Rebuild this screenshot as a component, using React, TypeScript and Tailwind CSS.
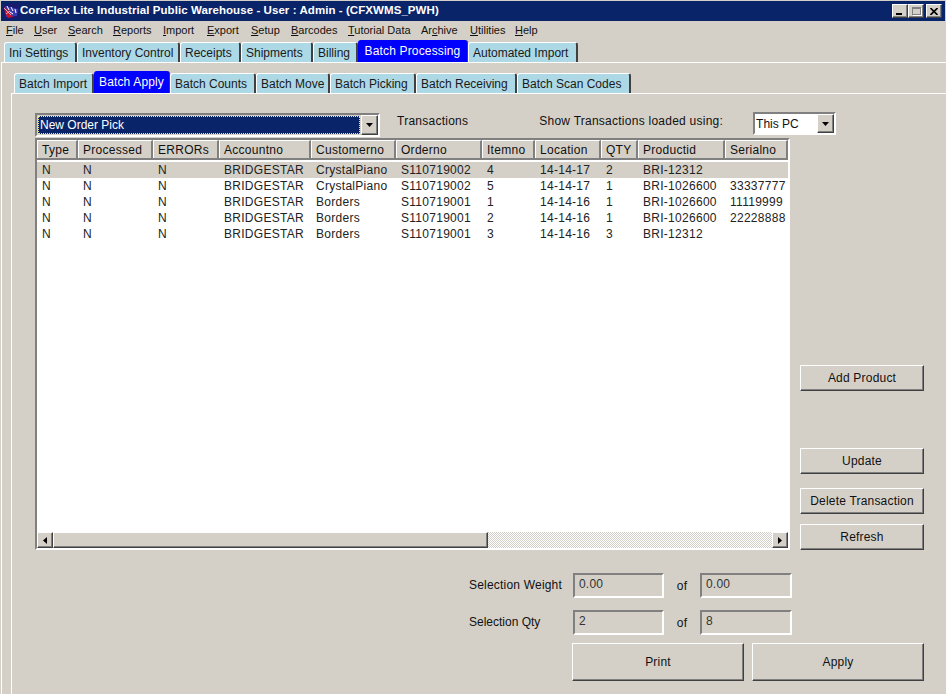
import React from "react";

const menus: [string, string, string, number][] = [
  ["", "F", "ile", 28],
  ["", "U", "ser", 34],
  ["", "S", "earch", 45],
  ["", "R", "eports", 50],
  ["", "I", "mport", 44],
  ["", "E", "xport", 44],
  ["", "S", "etup", 40],
  ["", "B", "arcodes", 57],
  ["", "T", "utorial Data", 73],
  ["Ar", "c", "hive", 49],
  ["", "U", "tilities", 45],
  ["", "H", "elp", 30],
];

const mainTabs: [string, number, boolean][] = [
  ["Ini Settings", 73, false],
  ["Inventory Control", 103, false],
  ["Receipts", 61, false],
  ["Shipments", 72, false],
  ["Billing", 45, false],
  ["Batch Processing", 110, true],
  ["Automated Import", 110, false],
];

const subTabs: [string, number, boolean][] = [
  ["Batch Import", 80, false],
  ["Batch Apply", 76, true],
  ["Batch Counts", 86, false],
  ["Batch Move", 74, false],
  ["Batch Picking", 86, false],
  ["Batch Receiving", 101, false],
  ["Batch Scan Codes", 114, false],
];

const cols = [
  "Type",
  "Processed",
  "ERRORs",
  "Accountno",
  "Customerno",
  "Orderno",
  "Itemno",
  "Location",
  "QTY",
  "Productid",
  "Serialno",
];

const rows = [
  ["N", "N", "N", "BRIDGESTAR", "CrystalPiano", "S110719002", "4", "14-14-17", "2", "BRI-12312", ""],
  ["N", "N", "N", "BRIDGESTAR", "CrystalPiano", "S110719002", "5", "14-14-17", "1", "BRI-1026600", "33337777"],
  ["N", "N", "N", "BRIDGESTAR", "Borders", "S110719001", "1", "14-14-16", "1", "BRI-1026600", "11119999"],
  ["N", "N", "N", "BRIDGESTAR", "Borders", "S110719001", "2", "14-14-16", "1", "BRI-1026600", "22228888"],
  ["N", "N", "N", "BRIDGESTAR", "Borders", "S110719001", "3", "14-14-16", "3", "BRI-12312", ""],
];

const gridCols = "grid grid-cols-[41px_75px_66px_92px_85px_86px_53px_66px_37px_87px_63px]";

const bevel =
  "border border-t-white border-l-white border-r-[#404040] border-b-[#404040] shadow-[inset_-1px_-1px_0_#808080] bg-[#d4d0c8]";

const sunken =
  "border-2 border-t-[#808080] border-l-[#808080] border-r-white border-b-white";

function Arrow({ dir }: { dir: "down" | "left" | "right" }) {
  const pts = dir === "down" ? "0,0 7,0 3.5,4" : dir === "left" ? "4,0 4,7 0,3.5" : "0,0 0,7 4,3.5";
  return (
    <svg width={dir === "down" ? 7 : 4} height={dir === "down" ? 4 : 7} className="block">
      <polygon points={pts} fill="#000" />
    </svg>
  );
}

function Tabs({ items }: { items: [string, number, boolean][] }) {
  return (
    <div className="flex items-end h-[21px]">
      {items.map(([label, w, on]) => (
        <div
          key={label}
          style={{ width: w }}
          className={
            on
              ? "h-[22px] shrink-0 flex items-center justify-center rounded-t-[3px] bg-[#0000ff] text-white text-[12px] tracking-[0.15px] pb-[1px] border-r border-r-[#404040]"
              : "h-[20px] shrink-0 flex items-center pl-[4px] rounded-t-[3px] bg-[#add8e6] text-[#1a1a1a] text-[12px] border-t border-l border-t-white border-l-white border-r-2 border-r-[#404040]"
          }
        >
          <span className="whitespace-nowrap">{label}</span>
        </div>
      ))}
    </div>
  );
}

function Button({ label, className }: { label: string; className: string }) {
  return (
    <div className={`${bevel} flex items-center justify-center text-[12px] tracking-[0.2px] text-[#111] ${className}`}>
      {label}
    </div>
  );
}

function Field({ value, className }: { value: string; className: string }) {
  return (
    <div className={`${sunken} ${className} h-[25px] pl-[4px] text-[12px] tracking-[0.2px] leading-[19px] text-[#333]`}>
      {value}
    </div>
  );
}

export default function App() {
  return (
    <div className="w-[946px] h-[694px] overflow-hidden bg-[#d4d0c8] font-['Liberation_Sans',Arial,sans-serif] text-[#111] flex flex-col">
      {/* Title bar */}
      <div className="h-[20px] mt-px ml-px mr-[1px] shrink-0 bg-[#0a246a] flex items-center pl-[2px] pr-[3px]">
        <svg width="16" height="15" viewBox="0 0 16 15" className="shrink-0 mr-[1px]">
          <rect width="16" height="15" fill="#1a1a6e" />
          <polygon points="2,2 15,5 14,12 3,13" fill="#3a3ab0" />
          <polygon points="1,3 6,7 10,13 5,14 2,9" fill="#c8102e" />
          <path d="M4 2 L6 6 M8 3 L10 7 M12 5 L13 9 M7 8 L10 10" stroke="#fff" strokeWidth="1" />
          <path d="M1 4 L8 11 M3 10 L7 7" stroke="#e0b0c0" strokeWidth="1" />
        </svg>
        <span className="text-white font-bold text-[11.5px] tracking-[0.07px] whitespace-nowrap">
          CoreFlex Lite Industrial Public Warehouse - User : Admin - (CFXWMS_PWH)
        </span>
        <div className="ml-auto flex items-center">
          <div className={`${bevel} w-[16px] h-[14px] flex items-end pb-[2px] pl-[3px]`}>
            <div className="w-[6px] h-[2px] bg-black" />
          </div>
          <div className={`${bevel} w-[16px] h-[14px] flex items-center justify-center`}>
            <div className="w-[9px] h-[8px] border border-[#808080] border-t-2 shadow-[1px_1px_0_#fff]" />
          </div>
          <div className={`${bevel} w-[16px] h-[14px] ml-[2px] flex items-center justify-center`}>
            <svg width="8" height="7" viewBox="0 0 8 7">
              <path d="M0.5 0 L7.5 7 M7.5 0 L0.5 7" stroke="#000" strokeWidth="1.6" />
            </svg>
          </div>
        </div>
      </div>

      {/* Menu bar */}
      <div className="h-[20px] shrink-0 flex items-center pl-[6px] pb-[2px] text-[11px] text-[#111]">
        {menus.map(([pre, key, rest, w]) => (
          <span key={pre + key + rest} style={{ width: w }} className="shrink-0 whitespace-nowrap">
            {pre}
            <u>{key}</u>
            {rest}
          </span>
        ))}
      </div>

      {/* Main tabs */}
      <div className="pl-[4px] shrink-0">
        <Tabs items={mainTabs} />
      </div>

      {/* Outer panel */}
      <div className="flex-1 ml-px border-t border-l border-t-white border-l-white pl-[9px] pt-[9px] flex flex-col min-h-0">
        <div className="pl-[3px] shrink-0">
          <Tabs items={subTabs} />
        </div>

        {/* Inner panel */}
        <div className="flex-1 border-t border-l border-t-white border-l-white pl-[23px] pt-[17px] min-h-0">
          {/* Filter row */}
          <div className="h-[27px] flex items-start text-[12px] tracking-[0.25px]">
            <div className={`${sunken} w-[345px] h-[24px] mt-[2px] flex bg-[#d4d0c8]`}>
              <div className="flex-1 m-px border border-dotted border-[#f0e68c] bg-[#0a246a] text-white text-[12px] leading-[16px] pl-[1px] tracking-normal">
                New Order Pick
              </div>
              <div className={`${bevel} w-[17px] flex items-center justify-center`}>
                <Arrow dir="down" />
              </div>
            </div>
            <span className="ml-[17px] mt-[3px] leading-[14px] whitespace-nowrap">Transactions</span>
            <span className="ml-[71px] mt-[3px] leading-[14px] whitespace-nowrap">Show Transactions loaded using:</span>
            <div className={`${sunken} ml-[30px] w-[83px] h-[23px] mt-[1px] bg-white flex items-center shrink-0`}>
              <span className="flex-1 pl-[1px] text-[12px] tracking-normal">This PC</span>
              <div className={`${bevel} w-[17px] h-full flex items-center justify-center`}>
                <Arrow dir="down" />
              </div>
            </div>
          </div>

          {/* Table + side buttons */}
          <div className="flex items-start">
            <div className="w-[755px] h-[412px] shrink-0 border-2 border-t-[#808080] border-l-[#808080] border-r-white border-b-white bg-white flex flex-col text-[12px] tracking-[0.28px] overflow-hidden">
              <div className={`${gridCols} h-[20px] shrink-0 bg-[#d4d0c8] border-b-2 border-b-[#808080]`}>
                {cols.map((c) => (
                  <div
                    key={c}
                    className="border-t border-t-white border-l border-l-white border-r-2 border-r-[#808080] pl-[4px] leading-[19px] whitespace-nowrap overflow-hidden"
                  >
                    {c}
                  </div>
                ))}
              </div>
              <div className="flex-1 pt-[2px] min-h-0">
                {rows.map((r, i) => (
                  <div key={i} className={`${gridCols} h-[16px] leading-[16px] text-[#222] ${i === 0 ? "bg-[#d4d0c8]" : "bg-white"}`}>
                    {r.map((v, j) => (
                      <div key={j} className="pl-[5px] whitespace-nowrap overflow-hidden">
                        {v}
                      </div>
                    ))}
                  </div>
                ))}
              </div>
              {/* Scrollbar */}
              <div className="h-[16px] shrink-0 flex bg-[repeating-conic-gradient(#d4d0c8_0_25%,#ffffff_0_50%)] bg-[length:2px_2px]">
                <div className={`${bevel} w-[16px] flex items-center justify-center`}>
                  <Arrow dir="left" />
                </div>
                <div className={`${bevel} w-[435px]`} />
                <div className={`${bevel} w-[16px] ml-auto flex items-center justify-center`}>
                  <Arrow dir="right" />
                </div>
              </div>
            </div>

            <div className="ml-[10px] w-[124px] flex flex-col shrink-0">
              <Button label="Add Product" className="h-[26px] mt-[227px]" />
              <Button label="Update" className="h-[26px] mt-[57px]" />
              <Button label="Delete Transaction" className="h-[26px] mt-[14px]" />
              <Button label="Refresh" className="h-[26px] mt-[10px]" />
            </div>
          </div>

          {/* Totals */}
          <div className="mt-[23px] pl-[434px] text-[12px] tracking-[0.2px]">
            <div className="flex items-center h-[25px]">
              <span className="w-[104px] pb-[2px] whitespace-nowrap">Selection Weight</span>
              <Field value="0.00" className="w-[91px]" />
              <span className="w-[36px] text-center">of</span>
              <Field value="0.00" className="w-[92px]" />
            </div>
            <div className="flex items-center h-[25px] mt-[12px]">
              <span className="w-[104px] pb-[2px] tracking-normal whitespace-nowrap">Selection Qty</span>
              <Field value="2" className="w-[91px]" />
              <span className="w-[36px] text-center">of</span>
              <Field value="8" className="w-[92px]" />
            </div>
            <div className="flex mt-[8px] ml-[103px]">
              <Button label="Print" className="w-[172px] h-[38px]" />
              <Button label="Apply" className="w-[172px] h-[38px] ml-[8px]" />
            </div>
          </div>
        </div>
      </div>
    </div>
  );
}
